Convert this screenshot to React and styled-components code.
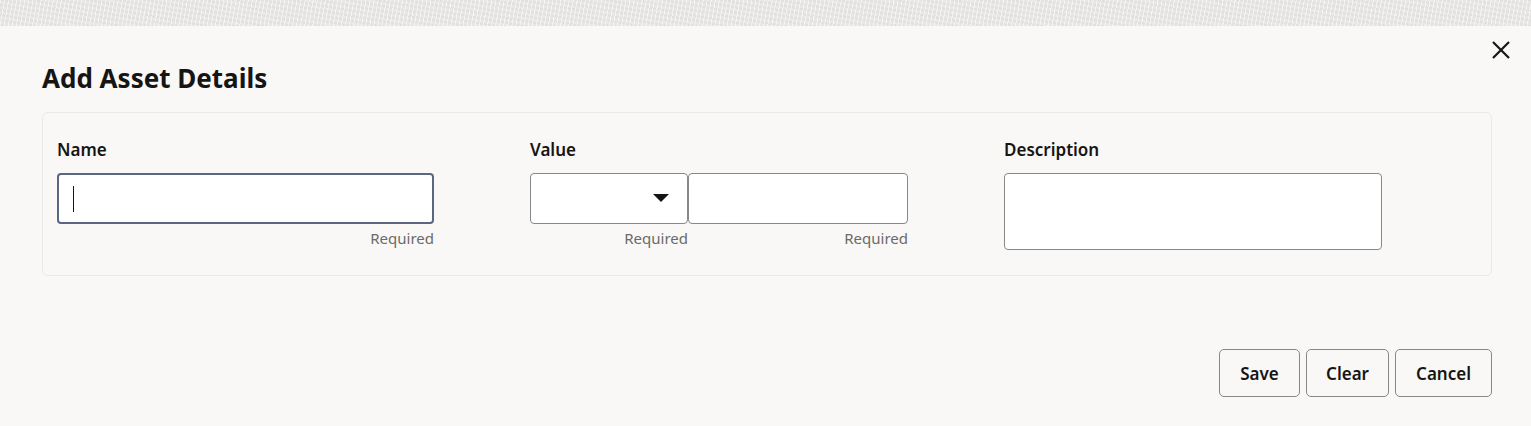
import React from "react";
import styled, { createGlobalStyle } from "styled-components";

const GlobalStyle = createGlobalStyle`
  html, body {
    margin: 0;
    padding: 0;
    background: #f9f8f6;
    font-family: "Noto Sans", "Open Sans", sans-serif;
    color: #161513;
  }
`;

const Backdrop = styled.div`
  height: 26px;
  background-color: #e8e7e5;
  background-image: repeating-linear-gradient(
      100deg,
      rgba(255, 255, 255, 0.55) 0 1px,
      transparent 1px 4px
    ),
    repeating-linear-gradient(
      10deg,
      rgba(0, 0, 0, 0.03) 0 2px,
      transparent 2px 5px
    );
`;

const Dialog = styled.div`
  background: #f9f8f6;
  height: 400px;
  box-sizing: border-box;
  padding: 0 39px 0 42px;
  display: flex;
  flex-direction: column;
`;

const Header = styled.div`
  display: flex;
  justify-content: space-between;
  align-items: flex-start;
  padding-top: 13px;
  margin-right: -20px;
  height: 86px;
  box-sizing: border-box;
`;

const Title = styled.h1`
  margin: 22px 0 0;
  font-size: 26px;
  font-weight: 700;
  line-height: 34px;
`;

const CloseButton = styled.button`
  border: 0;
  background: transparent;
  padding: 0;
  width: 22px;
  height: 22px;
  cursor: pointer;
  display: flex;
  align-items: center;
  justify-content: center;
`;

const Panel = styled.div`
  border: 1px solid #ebe9e5;
  border-radius: 6px;
  padding: 26px 14px 18px;
  display: grid;
  grid-template-columns: 377px 378px 378px;
  column-gap: 96px;
  height: 164px;
  box-sizing: border-box;
`;

const Field = styled.div`
  display: flex;
  flex-direction: column;
`;

const Label = styled.label`
  font-size: 17px;
  font-weight: 600;
  line-height: 22px;
  margin-bottom: 12px;
`;

const Row = styled.div`
  display: flex;
`;

const Box = styled.div`
  box-sizing: border-box;
  background: #fff;
  border: ${(p) => (p.$focused ? "2px solid #5b6685" : "1px solid #8a8886")};
  border-radius: 4px;
  height: ${(p) => p.$height || 51}px;
  width: ${(p) => p.$width}px;
  display: flex;
  align-items: center;
  padding: 0 14px;
  position: relative;
`;

const Caret = styled.span`
  width: 1px;
  height: 26px;
  background: #161513;
`;

const Arrow = styled.span`
  position: absolute;
  right: 18px;
  top: 20px;
  width: 0;
  height: 0;
  border-left: 8px solid transparent;
  border-right: 8px solid transparent;
  border-top: 8px solid #161513;
`;

const Helpers = styled.div`
  display: flex;
`;

const Helper = styled.span`
  width: ${(p) => p.$width}px;
  text-align: right;
  font-size: 15px;
  line-height: 20px;
  color: #6b6a68;
  margin-top: 4px;
`;

const Footer = styled.div`
  display: flex;
  justify-content: flex-end;
  gap: 6px;
  margin-top: 73px;
`;

const Button = styled.button`
  box-sizing: border-box;
  height: 48px;
  width: ${(p) => p.$width}px;
  border: 1px solid #8a8886;
  border-radius: 5px;
  background: #f9f8f6;
  font-family: "Noto Sans", "Open Sans", sans-serif;
  font-size: 17px;
  font-weight: 600;
  color: #161513;
  cursor: pointer;
`;

export default function App() {
  return (
    <>
      <GlobalStyle />
      <Backdrop />
      <Dialog>
        <Header>
          <Title>Add Asset Details</Title>
          <CloseButton aria-label="Close">
            <svg width="20" height="20" viewBox="0 0 20 20">
              <path d="M2 2 L18 18 M18 2 L2 18" stroke="#161513" strokeWidth="2.2" />
            </svg>
          </CloseButton>
        </Header>
        <Panel>
          <Field>
            <Label>Name</Label>
            <Box $focused $width={377}>
              <Caret />
            </Box>
            <Helpers>
              <Helper $width={377}>Required</Helper>
            </Helpers>
          </Field>
          <Field>
            <Label>Value</Label>
            <Row>
              <Box $width={158}>
                <Arrow />
              </Box>
              <Box $width={220} />
            </Row>
            <Helpers>
              <Helper $width={158}>Required</Helper>
              <Helper $width={220}>Required</Helper>
            </Helpers>
          </Field>
          <Field>
            <Label>Description</Label>
            <Box $width={378} $height={77} />
          </Field>
        </Panel>
        <Footer>
          <Button $width={81}>Save</Button>
          <Button $width={83}>Clear</Button>
          <Button $width={97}>Cancel</Button>
        </Footer>
      </Dialog>
    </>
  );
}
